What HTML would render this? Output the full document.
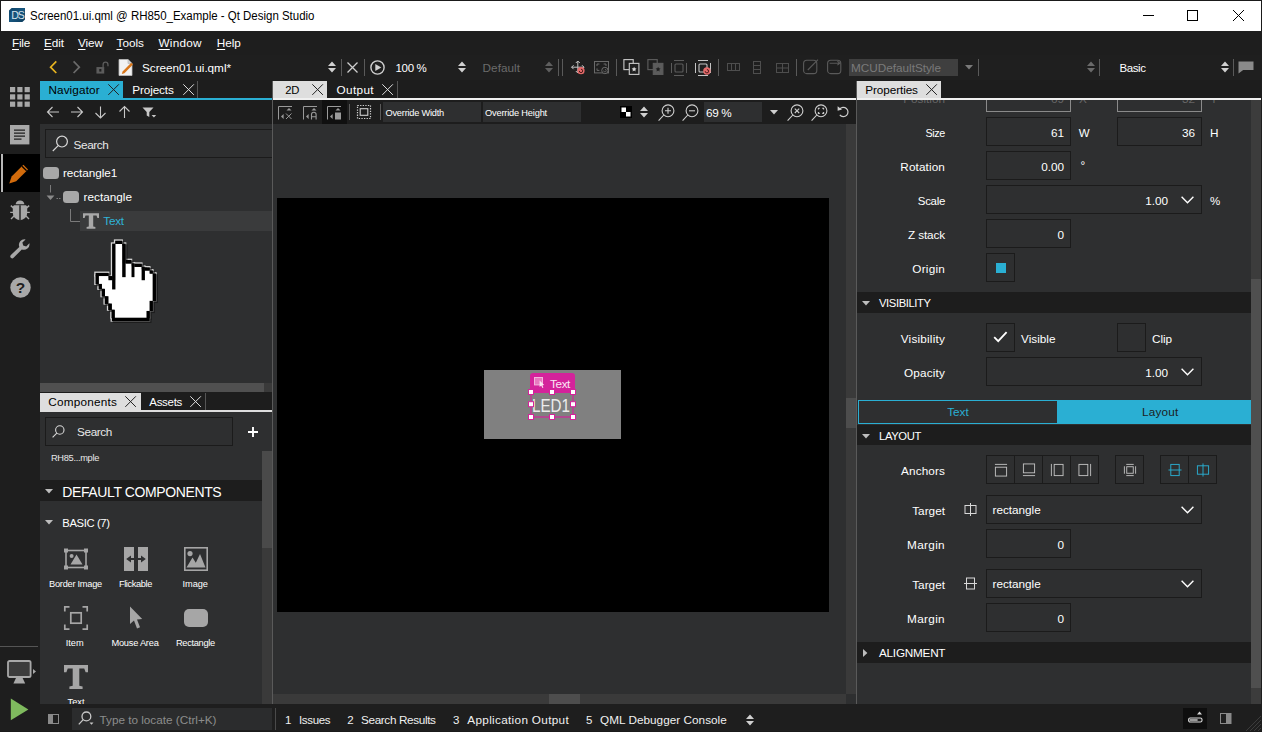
<!DOCTYPE html>
<html lang="en">
<head>
<meta charset="utf-8">
<title>Screen01.ui.qml @ RH850_Example - Qt Design Studio</title>
<style>
*{box-sizing:border-box;margin:0;padding:0}
html,body{width:1262px;height:732px;overflow:hidden;background:#2e2f30}
body{font-family:"Liberation Sans",sans-serif;font-size:12px;color:#fff;position:relative}
.a{position:absolute}
.t{position:absolute;white-space:nowrap;line-height:16px;height:16px}
svg{position:absolute;overflow:visible}
u{text-decoration:underline;text-underline-offset:2px;text-decoration-thickness:1px}
.f{position:absolute;background:#2e2f30;border:1px solid #1b1b1b}
</style>
</head>
<body>
<div class="a" style="left:0px;top:0px;width:1262px;height:31px;background:#fff;border:1px solid #1a1a1a;border-bottom:0"></div>
<div class="a" style="left:0px;top:31px;width:1262px;height:24px;background:#1e1e1e;"></div>
<div class="a" style="left:0px;top:55px;width:1262px;height:25px;background:#1f1f1f;"></div>
<div class="a" style="left:0px;top:55px;width:40px;height:677px;background:#1e1e1e;"></div>
<div class="a" style="left:40px;top:80px;width:1222px;height:20px;background:#1d1d1d;"></div>
<div class="t" id="t0" style="left:30px;top:7.5px;font-size:12.5px;color:#000;transform:scaleX(0.9175);transform-origin:0 0;">Screen01.ui.qml @ RH850_Example - Qt Design Studio</div>
<svg style="left:9px;top:8px" width="16" height="14" viewBox="0 0 16 14"><defs><linearGradient id="dsg" x1="0" y1="0" x2="1" y2="1"><stop offset="0" stop-color="#0f4468"/><stop offset="0.5" stop-color="#17567f"/><stop offset="1" stop-color="#0c3b5b"/></linearGradient></defs><path d="M2.6 0H16V11.4L13.4 14H0V2.6z" fill="url(#dsg)"/><text x="8.5" y="10.9" font-family="Liberation Sans,sans-serif" font-size="10.6" fill="#d4e2ec" text-anchor="middle" letter-spacing="-1">DS</text></svg>
<svg style="left:1130px;top:0" width="132" height="31" viewBox="0 0 132 31" fill="none" stroke="#000" stroke-width="1"><path d="M13 15.5h11"/><rect x="57.5" y="10.5" width="10" height="10"/><path d="M103 10l11 11M114 10l-11 11"/></svg>
<div class="t" id="t1" style="left:12px;top:34.5px;font-size:11.75px;color:#fff;letter-spacing:-0.238px;"><u>F</u>ile</div>
<div class="t" id="t2" style="left:44px;top:34.5px;font-size:11.75px;color:#fff;letter-spacing:-0.066px;"><u>E</u>dit</div>
<div class="t" id="t3" style="left:78px;top:34.5px;font-size:11.75px;color:#fff;letter-spacing:-0.116px;"><u>V</u>iew</div>
<div class="t" id="t4" style="left:116.5px;top:34.5px;font-size:11.75px;color:#fff;letter-spacing:0.013px;"><u>T</u>ools</div>
<div class="t" id="t5" style="left:158.4px;top:34.5px;font-size:11.75px;color:#fff;letter-spacing:0.267px;"><u>W</u>indow</div>
<div class="t" id="t6" style="left:216.8px;top:34.5px;font-size:11.75px;color:#fff;letter-spacing:-0.097px;"><u>H</u>elp</div>
<svg style="left:49px;top:60px" width="34" height="15" viewBox="0 0 34 15" fill="none" stroke-width="1.7"><path d="M7.3 1.4L1.6 7.2L7.3 13" stroke="#e6b320"/><path d="M24.6 1.4L30.3 7.2L24.6 13" stroke="#6a6a6a"/></svg>
<svg style="left:95.5px;top:60.5px" width="13" height="13" viewBox="0 0 15 15"><rect x="0.5" y="7" width="9" height="7.5" fill="#5c5c5c"/><rect x="3.8" y="9.2" width="2.4" height="3" fill="#1f1f1f"/><path d="M8.2 7V4.2a2.8 2.8 0 0 1 5.6 0V6" fill="none" stroke="#5c5c5c" stroke-width="1.5"/></svg>
<svg style="left:118px;top:59px" width="16" height="17" viewBox="0 0 16 17"><path d="M1 0.5h9l4 4V16.5H1z" fill="#f2f2f2" stroke="#bdbdbd" stroke-width="0.8"/><path d="M10 0.5v4h4" fill="#d0d0d0" stroke="#bdbdbd" stroke-width="0.8"/><path d="M3.8 15l0.8-2.6 8.6-8.6 1.8 1.8-8.6 8.6z" fill="#d8761a"/></svg>
<div class="t" id="t7" style="left:142px;top:59.6px;font-size:11.75px;color:#fff;letter-spacing:-0.030px;">Screen01.ui.qml*</div>
<svg style="left:328px;top:61px" width="8" height="12" viewBox="0 0 8 12"><path d="M0 5L4 0.5L8 5zM0 7L4 11.5L8 7z" fill="#d0d0d0"/></svg>
<div class="a" style="left:341px;top:59px;width:1px;height:17px;background:#5a5a5a;"></div>
<svg style="left:347px;top:62px" width="11" height="11" viewBox="0 0 11 11"><path d="M0.5 0.5l10 10M10.5 0.5l-10 10" stroke="#cfcfcf" stroke-width="1.3"/></svg>
<div class="a" style="left:364px;top:59px;width:1px;height:17px;background:#5a5a5a;"></div>
<svg style="left:370px;top:60px" width="15" height="15" viewBox="0 0 15 15"><circle cx="7.5" cy="7.5" r="6.6" fill="none" stroke="#cfcfcf" stroke-width="1.4"/><path d="M5.3 3.9v7.2l6-3.6z" fill="#cfcfcf"/></svg>
<div class="t" id="t8" style="left:395.5px;top:59.6px;font-size:11.5px;color:#fff;letter-spacing:-0.322px;">100 %</div>
<svg style="left:457.5px;top:61px" width="8" height="12" viewBox="0 0 8 12"><path d="M0 5L4 0.5L8 5zM0 7L4 11.5L8 7z" fill="#d0d0d0"/></svg>
<div class="t" id="t9" style="left:482.6px;top:59.6px;font-size:11.75px;color:#6b6b6b;letter-spacing:0.024px;">Default</div>
<svg style="left:545px;top:61px" width="8" height="12" viewBox="0 0 8 12"><path d="M0 5L4 0.5L8 5zM0 7L4 11.5L8 7z" fill="#5f5f5f"/></svg>
<div class="a" style="left:558px;top:59px;width:1px;height:17px;background:#5a5a5a;"></div>
<div class="a" style="left:562px;top:59px;width:1px;height:17px;background:#5a5a5a;"></div>
<svg style="left:570.5px;top:60px" width="15" height="15" viewBox="0 0 15 15"><g fill="none" stroke="#c4c4c4" stroke-width="1"><path d="M6.8 1v12M0.6 7.2h12.4"/><path d="M4.8 3L6.8 1L8.8 3M2.6 5.2L0.6 7.2L2.6 9.2M11 5.2L13 7.2L11 9.2M4.8 11L6.8 13L8.8 11"/></g><circle cx="10" cy="10.7" r="3.6" fill="#e46a6a"/><path d="M8.3 10.899999999999999a1.7 1.7 0 1 0 1.7-1.7" fill="none" stroke="#3a1212" stroke-width="0.9"/></svg>
<svg style="left:593.5px;top:61px" width="16" height="14" viewBox="0 0 16 14" fill="none" stroke="#6a6a6a" stroke-width="1"><rect x="0.5" y="0.5" width="14" height="11.4"/><path d="M3 5V3H5.4M9.6 3H12V5M3 7.4V9.4H5.4"/><circle cx="10.9" cy="9.5" r="3.2" fill="#1f1f1f"/><path d="M9.6 9.6a1.3 1.3 0 1 0 1.3-1.3" stroke-width="0.8"/></svg>
<div class="a" style="left:616px;top:59px;width:1px;height:17px;background:#5a5a5a;"></div>
<svg style="left:622.5px;top:59px" width="17" height="16" viewBox="0 0 17 16"><rect x="0.9" y="0.6" width="9.3" height="10" fill="none" stroke="#c4c4c4" stroke-width="1.15"/><rect x="6.3" y="4.4" width="9.6" height="11" fill="#1f1f1f" stroke="#c4c4c4" stroke-width="1.15"/><path d="M11.1 7.8l0.75 1.55 1.7 0.2-1.25 1.2 0.3 1.7-1.5-0.85-1.5 0.85 0.3-1.7-1.25-1.2 1.7-0.2z" fill="#d8d8d8"/></svg>
<svg style="left:646.5px;top:59px" width="17" height="16" viewBox="0 0 17 16"><rect x="0.9" y="0.6" width="9.3" height="10" fill="none" stroke="#5c5c5c" stroke-width="1.15"/><rect x="6.3" y="4.4" width="9.6" height="11" fill="#5c5c5c" stroke="#5c5c5c" stroke-width="1.15"/><path d="M11.1 7.8l0.75 1.55 1.7 0.2-1.25 1.2 0.3 1.7-1.5-0.85-1.5 0.85 0.3-1.7-1.25-1.2 1.7-0.2z" fill="#1f1f1f"/></svg>
<svg style="left:670.5px;top:59.5px" width="16" height="16" viewBox="0 0 16 16" fill="none" stroke="#5c5c5c" stroke-width="1"><path d="M3 0.5h10M3 15.5h10M0.5 3v10M15.5 3v10"/><rect x="4" y="4" width="8" height="8" rx="1" stroke-width="1.1"/></svg>
<svg style="left:694.5px;top:59.5px" width="16" height="16" viewBox="0 0 16 16" fill="none" stroke="#c4c4c4" stroke-width="1"><path d="M3 0.5h10M3 15.5h10M0.5 3v10M15.5 3v10"/><rect x="4" y="4" width="8" height="8" rx="1" stroke-width="1.1"/><circle stroke="none" cx="11.9" cy="11" r="3.7" fill="#e46a6a"/><path d="M10.200000000000001 11.2a1.7 1.7 0 1 0 1.7-1.7" fill="none" stroke="#3a1212" stroke-width="0.9"/></svg>
<div class="a" style="left:718px;top:59px;width:1px;height:17px;background:#5a5a5a;"></div>
<svg style="left:727px;top:63px" width="13" height="8" viewBox="0 0 13 8" fill="none" stroke="#4e4e4e" stroke-width="1"><rect x="0.5" y="0.5" width="12" height="7"/><path d="M4.5 0.5v7M8.5 0.5v7"/></svg>
<svg style="left:753px;top:61px" width="8" height="13" viewBox="0 0 8 13" fill="none" stroke="#4e4e4e" stroke-width="1"><rect x="0.5" y="0.5" width="7" height="12"/><path d="M0.5 4.5h7M0.5 8.5h7"/></svg>
<svg style="left:775.5px;top:62.5px" width="13" height="10" viewBox="0 0 13 10" fill="none" stroke="#4e4e4e" stroke-width="1"><rect x="0.5" y="0.5" width="12" height="9"/><path d="M6.5 0.5v9M0.5 5h12"/></svg>
<div class="a" style="left:796px;top:59px;width:1px;height:17px;background:#5a5a5a;"></div>
<svg style="left:803px;top:59px" width="16" height="16" viewBox="0 0 16 16" fill="none" stroke="#5a5a5a" stroke-width="1.1"><rect x="0.6" y="1.2" width="13.2" height="13.4" rx="3.2"/><path d="M4.8 11L15 0.6"/></svg>
<svg style="left:827px;top:59px" width="15" height="16" viewBox="0 0 15 16" fill="none" stroke="#5a5a5a" stroke-width="1.1"><rect x="0.6" y="1.2" width="13.2" height="13.4" rx="3.2"/><path d="M2.6 4.2h10M10.4 2.2l2.4 2-2.4 2"/></svg>
<div class="a" style="left:849px;top:59px;width:109px;height:17px;background:#3f3f3f;"></div>
<div class="t" id="t10" style="left:851px;top:59.6px;font-size:11.75px;color:#7a7a7a;letter-spacing:-0.008px;">MCUDefaultStyle</div>
<svg style="left:965px;top:65px" width="8" height="5" viewBox="0 0 8 5"><path d="M0 0h8L4 4.6z" fill="#7a7a7a"/></svg>
<div class="a" style="left:978px;top:59px;width:1px;height:17px;background:#5a5a5a;"></div>
<svg style="left:1086.5px;top:61px" width="8" height="12" viewBox="0 0 8 12"><path d="M0 5L4 0.5L8 5zM0 7L4 11.5L8 7z" fill="#6a6a6a"/></svg>
<div class="a" style="left:1099px;top:59px;width:1px;height:17px;background:#5a5a5a;"></div>
<div class="t" id="t11" style="left:1119.4px;top:59.6px;font-size:11.5px;color:#fff;letter-spacing:-0.385px;">Basic</div>
<svg style="left:1220.5px;top:61px" width="8" height="12" viewBox="0 0 8 12"><path d="M0 5L4 0.5L8 5zM0 7L4 11.5L8 7z" fill="#d0d0d0"/></svg>
<div class="a" style="left:1233px;top:59px;width:1px;height:17px;background:#5a5a5a;"></div>
<svg style="left:1237px;top:61px" width="17" height="13" viewBox="0 0 17 13"><path d="M1.5 0.5h15v8.6H6.2L1.5 12.6z" fill="#8a8a8a"/></svg>
<div class="a" style="left:40px;top:98px;width:232px;height:2px;background:#2aafd3;"></div>
<div class="a" style="left:40px;top:81px;width:83px;height:17px;background:#2aafd3;"></div>
<div class="t" id="t12" style="left:48.4px;top:81.75px;font-size:11.75px;color:#000;letter-spacing:0.111px;">Navigator</div>
<svg style="left:108.2px;top:83.9px" width="11.2" height="11.2" viewBox="0 0 11.2 11.2"><path d="M0.3 0.3L10.899999999999999 10.899999999999999M10.899999999999999 0.3L0.3 10.899999999999999" stroke="#222" stroke-width="1"/></svg>
<div class="t" id="t13" style="left:132.3px;top:81.75px;font-size:11.75px;color:#fff;letter-spacing:-0.132px;">Projects</div>
<svg style="left:182.5px;top:83.9px" width="11.2" height="11.2" viewBox="0 0 11.2 11.2"><path d="M0.3 0.3L10.899999999999999 10.899999999999999M10.899999999999999 0.3L0.3 10.899999999999999" stroke="#ddd" stroke-width="1"/></svg>
<div class="a" style="left:197px;top:81px;width:1px;height:17px;background:#555;"></div>
<div class="a" style="left:273px;top:98px;width:988px;height:2px;background:#f0f0f0;"></div>
<div class="a" style="left:273px;top:81px;width:54px;height:17px;background:#dedede;"></div>
<div class="t" id="t14" style="left:285.3px;top:81.75px;font-size:11.25px;color:#000;letter-spacing:-0.345px;">2D</div>
<svg style="left:312.4px;top:83.9px" width="11.2" height="11.2" viewBox="0 0 11.2 11.2"><path d="M0.3 0.3L10.899999999999999 10.899999999999999M10.899999999999999 0.3L0.3 10.899999999999999" stroke="#222" stroke-width="1"/></svg>
<div class="t" id="t15" style="left:336.5px;top:81.75px;font-size:11.75px;color:#fff;letter-spacing:0.353px;">Output</div>
<svg style="left:382.3px;top:83.9px" width="11.2" height="11.2" viewBox="0 0 11.2 11.2"><path d="M0.3 0.3L10.899999999999999 10.899999999999999M10.899999999999999 0.3L0.3 10.899999999999999" stroke="#ddd" stroke-width="1"/></svg>
<div class="a" style="left:397px;top:81px;width:1px;height:17px;background:#555;"></div>
<div class="a" style="left:857px;top:81px;width:84px;height:17px;background:#dedede;"></div>
<div class="t" id="t16" style="left:865.3px;top:81.75px;font-size:11.75px;color:#000;letter-spacing:-0.096px;">Properties</div>
<svg style="left:926.2px;top:83.9px" width="11.2" height="11.2" viewBox="0 0 11.2 11.2"><path d="M0.3 0.3L10.899999999999999 10.899999999999999M10.899999999999999 0.3L0.3 10.899999999999999" stroke="#222" stroke-width="1"/></svg>
<div class="a" style="left:40px;top:392px;width:232px;height:20px;background:#1d1d1d;"></div>
<div class="a" style="left:40px;top:410px;width:232px;height:2px;background:#dedede;"></div>
<div class="a" style="left:40px;top:393px;width:100.5px;height:17px;background:#dedede;"></div>
<div class="t" id="t17" style="left:48.3px;top:393.75px;font-size:11.75px;color:#000;letter-spacing:0.208px;">Components</div>
<svg style="left:125.4px;top:395.9px" width="11.2" height="11.2" viewBox="0 0 11.2 11.2"><path d="M0.3 0.3L10.899999999999999 10.899999999999999M10.899999999999999 0.3L0.3 10.899999999999999" stroke="#222" stroke-width="1"/></svg>
<div class="t" id="t18" style="left:149.3px;top:393.75px;font-size:11.5px;color:#fff;letter-spacing:-0.303px;">Assets</div>
<svg style="left:190px;top:395.9px" width="11.2" height="11.2" viewBox="0 0 11.2 11.2"><path d="M0.3 0.3L10.899999999999999 10.899999999999999M10.899999999999999 0.3L0.3 10.899999999999999" stroke="#ddd" stroke-width="1"/></svg>
<div class="a" style="left:205px;top:393px;width:1px;height:17px;background:#555;"></div>
<div class="a" style="left:272px;top:81px;width:1px;height:623px;background:#5a5a5a;"></div>
<div class="a" style="left:856px;top:81px;width:1px;height:623px;background:#5a5a5a;"></div>
<div class="a" style="left:40px;top:100px;width:232px;height:24px;background:#1d1d1d;"></div>
<svg style="left:46px;top:105px" width="116" height="14" viewBox="0 0 116 14" fill="none" stroke="#c8c8c8" stroke-width="1.1"><path d="M1.5 7H13M6.5 2L1.5 7L6.5 12"/><path d="M25 7H36.5M31.5 2L36.5 7L31.5 12"/><path d="M54.5 1.5V13M49.5 8L54.5 13L59.5 8"/><path d="M78.5 13V1.5M73.5 6.5L78.5 1.5L83.5 6.5"/><path d="M96.5 2.5h11l-4.2 4.6v5l-2.6-1.6v-3.4z" fill="#c8c8c8" stroke="none"/><path d="M105.6 10h4.6l-2.3 2.5z" fill="#c8c8c8" stroke="none"/></svg>
<div class="f" style="left:45px;top:129px;width:227px;height:29px;border-right:0"></div>
<svg style="left:52px;top:135px" width="17" height="17" viewBox="0 0 17 17" fill="none" stroke="#d8d8d8" stroke-width="1.2"><circle cx="10" cy="6.6" r="5.4"/><path d="M6.2 10.6L0.8 16"/></svg>
<div class="t" id="t19" style="left:73.5px;top:136.5px;font-size:11.75px;color:#e8e8e8;letter-spacing:-0.372px;">Search</div>
<div class="a" style="left:43px;top:167px;width:16px;height:12px;background:#a8a8a8;border-radius:3.5px"></div>
<div class="t" id="t20" style="left:63px;top:165px;font-size:11.75px;color:#fff;letter-spacing:-0.067px;">rectangle1</div>
<div class="a" style="left:63px;top:191px;width:16px;height:12px;background:#a8a8a8;border-radius:3.5px"></div>
<div class="t" id="t21" style="left:83.6px;top:189px;font-size:11.75px;color:#fff;letter-spacing:0.006px;">rectangle</div>
<svg style="left:44px;top:184px" width="18" height="18" viewBox="0 0 18 18"><path d="M6.5 1V8.5" stroke="#7a7a7a" stroke-width="1"/><path d="M12.5 14.5h4" stroke="#7a7a7a" stroke-width="1" stroke-dasharray="1.5 1"/><path d="M2.6 11.5h7.8L6.5 16z" fill="#8a8a8a"/></svg>
<div class="a" style="left:80px;top:211px;width:192px;height:20px;background:#3a3b3c;"></div>
<svg style="left:70px;top:209px" width="11" height="13" viewBox="0 0 11 13" fill="none" stroke="#7a7a7a" stroke-width="1"><path d="M0.5 0V12.5H10"/></svg>
<svg style="left:83px;top:213px" width="16" height="16" viewBox="0 0 16 15.4"><path d="M0 0h16v4.6h-1.6l-0.9-2.3h-3.3v11l2.2 0.5v1.6H3.6v-1.6l2.2-0.5v-11H2.5l-0.9 2.3H0z" fill="#a8a8a8"/></svg>
<div class="t" id="t22" style="left:103.3px;top:213px;font-size:11.75px;color:#2fb4d8;letter-spacing:-0.266px;">Text</div>
<div class="a" style="left:40px;top:383px;width:232px;height:9px;background:#3a3a3a;"></div>
<div class="a" style="left:40px;top:383px;width:224px;height:9px;background:#505050;"></div>
<div class="f" style="left:45px;top:417px;width:188px;height:29px"></div>
<svg style="left:52px;top:425px" width="13" height="13" viewBox="0 0 13 13" fill="none" stroke="#d8d8d8" stroke-width="1.1"><circle cx="7.8" cy="5" r="4.2"/><path d="M4.8 8.2L0.6 12.4"/></svg>
<div class="t" id="t23" style="left:77px;top:424px;font-size:11.75px;color:#e8e8e8;letter-spacing:-0.372px;">Search</div>
<svg style="left:247.5px;top:427px" width="10" height="10" viewBox="0 0 10 10"><path d="M5 0v10M0 5h10" stroke="#fff" stroke-width="1.9"/></svg>
<div class="t" id="t24" style="left:51px;top:450px;font-size:9.25px;color:#e8e8e8;letter-spacing:-0.311px;">RH85...mple</div>
<div class="a" style="left:40px;top:480px;width:222px;height:21px;background:#1d1d1d;"></div>
<svg style="left:44.5px;top:489px" width="8" height="5" viewBox="0 0 8 5"><path d="M0 0h8L4 4.4z" fill="#bdbdbd"/></svg>
<div class="t" id="t25" style="left:62.3px;top:484px;font-size:14.0px;color:#fff;letter-spacing:-0.386px;">DEFAULT COMPONENTS</div>
<svg style="left:44.5px;top:520px" width="8" height="5" viewBox="0 0 8 5"><path d="M0 0h8L4 4.4z" fill="#bdbdbd"/></svg>
<div class="t" id="t26" style="left:62.3px;top:515px;font-size:11.25px;color:#fff;letter-spacing:-0.382px;">BASIC (7)</div>
<div class="a" style="left:262px;top:451px;width:10px;height:253px;background:#3a3a3a;"></div>
<div class="a" style="left:262px;top:451px;width:10px;height:97px;background:#4a4a4a;"></div>
<svg style="left:64px;top:547px" width="24" height="24" viewBox="0 0 24 24"><rect x="2" y="3.5" width="20" height="17" fill="none" stroke="#a6a6a6" stroke-width="1.6"/><g fill="#a6a6a6"><rect x="0" y="1.5" width="4" height="4"/><rect x="20" y="1.5" width="4" height="4"/><rect x="0" y="18.5" width="4" height="4"/><rect x="20" y="18.5" width="4" height="4"/><circle cx="7.6" cy="9" r="2"/><path d="M6.5 17.5L12.5 7.5L18.5 17.5z"/></g></svg>
<svg style="left:124px;top:547px" width="24" height="24" viewBox="0 0 24 24"><rect x="0" y="0" width="10" height="24" fill="#a6a6a6"/><rect x="14" y="0" width="10" height="24" fill="#a6a6a6"/><path d="M2.2 12L7 8.4V11h3v2H7v2.6zM21.8 12L17 8.4V11h-3v2h3v2.6z" fill="#2e2f30"/></svg>
<svg style="left:184px;top:547px" width="24" height="24" viewBox="0 0 24 24"><rect x="0.8" y="0.8" width="22.4" height="22.4" fill="none" stroke="#a6a6a6" stroke-width="1.6"/><g fill="#a6a6a6"><circle cx="6" cy="6.6" r="2.6"/><path d="M2.5 20.5L8.5 10.5L11.8 15.8L16 7L21.5 20.5z"/></g></svg>
<svg style="left:64px;top:606px" width="24" height="24" viewBox="0 0 24 24" fill="none" stroke="#a6a6a6" stroke-width="1.7"><path d="M0.8 5.5V0.8H5.5M18.5 0.8H23.2V5.5M23.2 18.5V23.2H18.5M5.5 23.2H0.8V18.5"/><rect x="6.8" y="6.8" width="10.4" height="10.4"/></svg>
<svg style="left:129px;top:606px" width="14" height="24" viewBox="0 0 14 24"><path d="M1 0.5V18L5 14.6L8 22.5L11 21.3L8 13.6L13.2 13z" fill="#a6a6a6"/></svg>
<div class="a" style="left:184px;top:609px;width:24px;height:18px;background:#a6a6a6;border-radius:5px"></div>
<svg style="left:64px;top:665px" width="24" height="24" viewBox="0 0 16 16"><path d="M0 0h16v4.6h-1.6l-0.9-2.3h-3.3v11l2.2 0.5v1.6H3.6v-1.6l2.2-0.5v-11H2.5l-0.9 2.3H0z" transform="scale(1 1.04)" fill="#a6a6a6"/></svg>
<div class="t" id="t27" style="left:49px;top:576px;font-size:9.25px;color:#fff;letter-spacing:-0.254px;">Border Image</div>
<div class="t" id="t28" style="left:118.9px;top:576px;font-size:9.25px;color:#fff;letter-spacing:-0.389px;">Flickable</div>
<div class="t" id="t29" style="left:182.6px;top:576px;font-size:9.25px;color:#fff;letter-spacing:-0.084px;">Image</div>
<div class="t" id="t30" style="left:65.7px;top:635px;font-size:9.25px;color:#fff;letter-spacing:0.000px;">Item</div>
<div class="t" id="t31" style="left:111.4px;top:635px;font-size:9.25px;color:#fff;letter-spacing:-0.217px;">Mouse Area</div>
<div class="t" id="t32" style="left:176px;top:635px;font-size:9.25px;color:#fff;letter-spacing:-0.317px;">Rectangle</div>
<div class="t" id="t33" style="left:67.5px;top:694px;font-size:9.25px;color:#fff;letter-spacing:0.008px;">Text</div>
<div class="a" style="left:273px;top:100px;width:583px;height:24px;background:#1d1d1d;"></div>
<svg style="left:278px;top:105.5px" width="15" height="14" viewBox="0 0 15 14"><path d="M0.5 13.5V0.5H14" fill="none" stroke="#9a9a9a" stroke-width="1"/><path d="M3 10.5L5.6 8V13z" fill="#9a9a9a"/><path d="M8.5 4.5h5L11 2z" fill="#9a9a9a"/><path d="M8 7.5l5.5 5.5M13.5 7.5L8 13" stroke="#9a9a9a" stroke-width="1" fill="none"/></svg>
<svg style="left:303px;top:105.5px" width="15" height="14" viewBox="0 0 15 14"><path d="M0.5 13.5V0.5H14" fill="none" stroke="#9a9a9a" stroke-width="1"/><path d="M3 10.5L5.6 8V13z" fill="#9a9a9a"/><path d="M8.5 4.5h5L11 2z" fill="#9a9a9a"/><path d="M8.5 13.5V8.6a2.3 2.3 0 0 1 4.6 0V13.5M8.5 10.8h4.6" stroke="#9a9a9a" stroke-width="1.1" fill="none"/></svg>
<div class="a" style="left:322px;top:100px;width:25px;height:24px;background:#101010;"></div>
<svg style="left:327px;top:105.5px" width="15" height="14" viewBox="0 0 15 14"><path d="M0.5 13.5V0.5H14" fill="none" stroke="#9a9a9a" stroke-width="1"/><path d="M3 10.5L5.6 8V13z" fill="#9a9a9a"/><path d="M8.5 4.5h5L11 2z" fill="#9a9a9a"/><rect x="8" y="6.5" width="6" height="7" fill="#9a9a9a"/></svg>
<div class="a" style="left:349px;top:104px;width:1px;height:16px;background:#5a5a5a;"></div>
<svg style="left:357px;top:105px" width="14" height="14" viewBox="0 0 14 14" fill="none" stroke="#d0d0d0"><rect x="0.5" y="0.5" width="13" height="13" stroke-width="1.2" stroke-dasharray="1.3 1.3"/><rect x="3.2" y="3.7" width="7.6" height="6.6" stroke-width="1.1"/></svg>
<div class="a" style="left:380px;top:104px;width:1px;height:16px;background:#5a5a5a;"></div>
<div class="a" style="left:383px;top:102px;width:98px;height:20px;background:#2e2f30;"></div>
<div class="a" style="left:483px;top:102px;width:98px;height:20px;background:#2e2f30;"></div>
<div class="t" id="t34" style="left:385.5px;top:105px;font-size:9.25px;color:#fff;letter-spacing:-0.228px;">Override Width</div>
<div class="t" id="t35" style="left:485px;top:105px;font-size:9.25px;color:#fff;letter-spacing:-0.185px;">Override Height</div>
<svg style="left:620px;top:106px" width="12" height="12" viewBox="0 0 12 12"><rect width="12" height="12" fill="#000"/><rect x="1.5" y="1.5" width="4.5" height="4.5" fill="#fff"/><rect x="6" y="6" width="4.5" height="4.5" fill="#fff"/></svg>
<svg style="left:640px;top:106px" width="8" height="12" viewBox="0 0 8 12"><path d="M0 5L4 0.5L8 5zM0 7L4 11.5L8 7z" fill="#d0d0d0"/></svg>
<svg style="left:658px;top:104px" width="17" height="18" viewBox="0 0 17 18" fill="none" stroke="#cfcfcf" stroke-width="1.1"><circle cx="10" cy="6.8" r="5.9"/><path d="M5.8 11L0.6 16.6"/><path d="M10 3.8v6M7 6.8h6"/></svg>
<svg style="left:682px;top:104px" width="17" height="18" viewBox="0 0 17 18" fill="none" stroke="#cfcfcf" stroke-width="1.1"><circle cx="10" cy="6.8" r="5.9"/><path d="M5.8 11L0.6 16.6"/><path d="M7 6.8h6"/></svg>
<div class="a" style="left:704px;top:102px;width:58px;height:20px;background:#2e2f30;"></div>
<div class="t" id="t36" style="left:706px;top:104.8px;font-size:11.75px;color:#fff;letter-spacing:-0.324px;">69 %</div>
<svg style="left:769.5px;top:110px" width="8" height="5" viewBox="0 0 8 5"><path d="M0 0h8L4 4.6z" fill="#cfcfcf"/></svg>
<svg style="left:787px;top:104px" width="17" height="18" viewBox="0 0 17 18" fill="none" stroke="#cfcfcf" stroke-width="1.1"><circle cx="10" cy="6.8" r="5.9"/><path d="M5.8 11L0.6 16.6"/><path d="M7.8 4.6l4.4 4.4M12.2 4.6L7.8 9"/></svg>
<svg style="left:811px;top:104px" width="17" height="18" viewBox="0 0 17 18" fill="none" stroke="#cfcfcf" stroke-width="1.1"><circle cx="10" cy="6.8" r="5.9"/><path d="M5.8 11L0.6 16.6"/><path d="M7.4 5.6V4.2h1.4M11.2 4.2h1.4v1.4M12.6 8v1.4h-1.4M8.8 9.4H7.4V8"/></svg>
<svg style="left:837px;top:105px" width="12" height="13" viewBox="0 0 12 13"><path d="M2.6 4.4A4.6 4.6 0 1 1 2.8 9.9" fill="none" stroke="#cfcfcf" stroke-width="1.2"/><path d="M0.6 1.2V5.8L5 4.6z" fill="#cfcfcf"/></svg>
<div class="a" style="left:277px;top:198px;width:552px;height:414px;background:#000;"></div>
<div class="a" style="left:484px;top:370px;width:137px;height:69px;background:#808080;"></div>
<div class="a" style="left:530px;top:373px;width:45px;height:20px;background:#d4239b;border-radius:3px 3px 0 0"></div>
<svg style="left:534px;top:377px" width="11" height="11" viewBox="0 0 11 11"><rect x="0.5" y="0.5" width="8" height="7.4" fill="#e878c0" stroke="#f4b4dc" stroke-width="1"/><path d="M5.6 3.6V10L7.2 8.6L8.4 11L9.4 10.5L8.3 8.2L10.2 8z" fill="#fbe3f2"/></svg>
<div class="t" id="t37" style="left:550px;top:375.6px;font-size:11.75px;color:#fbe6f4;letter-spacing:-0.391px;">Text</div>
<div class="t" id="t38" style="left:532px;top:396px;font-size:17.5px;color:#ececec;line-height:20px;height:20px;transform:scaleX(0.868);transform-origin:0 0;">LED1</div>
<svg style="left:520px;top:380px" width="70" height="50" viewBox="0 0 70 50"><rect x="11" y="12" width="42" height="25" fill="none" stroke="#d4239b" stroke-width="1.2"/><rect x="8.5" y="9.5" width="5" height="5" fill="#fff" stroke="#d4239b" stroke-width="1"/><rect x="8.5" y="21.69999999999999" width="5" height="5" fill="#fff" stroke="#d4239b" stroke-width="1"/><rect x="8.5" y="34.5" width="5" height="5" fill="#fff" stroke="#d4239b" stroke-width="1"/><rect x="29.5" y="9.5" width="5" height="5" fill="#fff" stroke="#d4239b" stroke-width="1"/><rect x="29.5" y="34.5" width="5" height="5" fill="#fff" stroke="#d4239b" stroke-width="1"/><rect x="50.5" y="9.5" width="5" height="5" fill="#fff" stroke="#d4239b" stroke-width="1"/><rect x="50.5" y="21.69999999999999" width="5" height="5" fill="#fff" stroke="#d4239b" stroke-width="1"/><rect x="50.5" y="34.5" width="5" height="5" fill="#fff" stroke="#d4239b" stroke-width="1"/></svg>
<div class="a" style="left:273px;top:694px;width:573px;height:10px;background:#3a3a3a;"></div>
<div class="a" style="left:549px;top:694px;width:31px;height:10px;background:#4d4d4d;"></div>
<div class="a" style="left:846px;top:124px;width:10px;height:570px;background:#3a3a3a;"></div>
<div class="a" style="left:846px;top:398px;width:10px;height:30px;background:#4d4d4d;"></div>
<div class="f" style="left:986px;top:83px;width:85px;height:29px;border-color:#8a8a8a"></div>
<div class="f" style="left:1117px;top:83px;width:85px;height:29px;border-color:#8a8a8a"></div>
<div class="t" id="t39" style="right:317px;top:91px;font-size:11.75px;color:#666;">Position</div>
<div class="t" id="t40" style="right:198px;top:91px;font-size:11.75px;color:#666;">69</div>
<div class="t" id="t41" style="right:67px;top:91px;font-size:11.75px;color:#666;">32</div>
<div class="t" id="t42" style="left:1079px;top:91px;font-size:11.75px;color:#666;">X</div>
<div class="t" id="t43" style="left:1210px;top:91px;font-size:11.75px;color:#666;">Y</div>
<div class="a" style="left:857px;top:81px;width:405px;height:17px;background:#1d1d1d;"></div>
<div class="a" style="left:857px;top:98px;width:404px;height:2px;background:#f0f0f0;"></div>
<div class="a" style="left:857px;top:81px;width:84px;height:17px;background:#dedede;"></div>
<div class="t" id="t44" style="left:865.3px;top:81.75px;font-size:11.75px;color:#000;letter-spacing:-0.096px;">Properties</div>
<svg style="left:926.2px;top:83.9px" width="11.2" height="11.2" viewBox="0 0 11.2 11.2"><path d="M0.3 0.3L10.899999999999999 10.899999999999999M10.899999999999999 0.3L0.3 10.899999999999999" stroke="#222" stroke-width="1"/></svg>
<div class="f" style="left:986px;top:117px;width:85px;height:29px;"></div>
<div class="f" style="left:1117px;top:117px;width:85px;height:29px;"></div>
<div class="t" id="t45" style="right:317px;top:124.5px;font-size:10.75px;color:#fff;letter-spacing:-0.330px;">Size</div>
<div class="t" id="t46" style="right:198px;top:124.5px;font-size:11.75px;color:#fff;">61</div>
<div class="t" id="t47" style="right:67px;top:124.5px;font-size:11.75px;color:#fff;">36</div>
<div class="t" id="t48" style="left:1078.8px;top:124.5px;font-size:11.5px;color:#fff;letter-spacing:-0.359px;">W</div>
<div class="t" id="t49" style="left:1210px;top:124.5px;font-size:11.75px;color:#fff;letter-spacing:0.000px;">H</div>
<div class="f" style="left:986px;top:151px;width:85px;height:29px;"></div>
<div class="t" id="t50" style="right:317px;top:158.5px;font-size:11.75px;color:#fff;letter-spacing:0.117px;">Rotation</div>
<div class="t" id="t51" style="right:198px;top:158.5px;font-size:11.75px;color:#fff;">0.00</div>
<div class="t" id="t52" style="left:1080.5px;top:157px;font-size:11.75px;color:#fff;">°</div>
<div class="f" style="left:986px;top:185px;width:216px;height:29px;"></div>
<div class="t" id="t53" style="right:317px;top:192.5px;font-size:11.5px;color:#fff;letter-spacing:-0.316px;">Scale</div>
<div class="t" id="t54" style="right:94px;top:192.5px;font-size:11.75px;color:#fff;">1.00</div>
<svg style="left:1180.5px;top:196.0px" width="13" height="8" viewBox="0 0 13 8"><path d="M0.6 0.8L6.5 6.8L12.4 0.8" fill="none" stroke="#fff" stroke-width="1.4"/></svg>
<div class="t" id="t55" style="left:1210px;top:192.5px;font-size:11.5px;color:#fff;letter-spacing:-0.234px;">%</div>
<div class="f" style="left:986px;top:219px;width:85px;height:29px;"></div>
<div class="t" id="t56" style="right:317px;top:226.5px;font-size:11.75px;color:#fff;letter-spacing:-0.125px;">Z stack</div>
<div class="t" id="t57" style="right:198px;top:226.5px;font-size:11.75px;color:#fff;">0</div>
<div class="f" style="left:986px;top:253px;width:29px;height:29px;"></div>
<div class="t" id="t58" style="right:317px;top:260.5px;font-size:11.75px;color:#fff;letter-spacing:0.226px;">Origin</div>
<div class="a" style="left:996px;top:263px;width:10px;height:10px;background:#2aafd3;"></div>
<div class="a" style="left:857px;top:292px;width:394px;height:20.6px;background:#1d1d1d;"></div>
<svg style="left:861.5px;top:300.5px" width="8" height="5" viewBox="0 0 8 5"><path d="M0 0h8L4 4.4z" fill="#bdbdbd"/></svg>
<div class="t" id="t59" style="left:879px;top:295.4px;font-size:11.25px;color:#fff;letter-spacing:-0.396px;">VISIBILITY</div>
<div class="f" style="left:986px;top:323px;width:29px;height:29px;"></div>
<div class="t" id="t60" style="right:317px;top:330.5px;font-size:11.75px;color:#fff;letter-spacing:0.197px;">Visibility</div>
<svg style="left:993px;top:331px" width="15" height="12" viewBox="0 0 15 12"><path d="M1.2 6.2L5.2 10.2L13.6 1.2" fill="none" stroke="#fff" stroke-width="1.8"/></svg>
<div class="t" id="t61" style="left:1021px;top:330.5px;font-size:11.75px;color:#fff;letter-spacing:0.013px;">Visible</div>
<div class="f" style="left:1117px;top:323px;width:29px;height:29px;"></div>
<div class="t" id="t62" style="left:1152px;top:330.5px;font-size:11.75px;color:#fff;letter-spacing:-0.062px;">Clip</div>
<div class="f" style="left:986px;top:357px;width:216px;height:29px;"></div>
<div class="t" id="t63" style="right:317px;top:364.5px;font-size:11.75px;color:#fff;letter-spacing:0.165px;">Opacity</div>
<div class="t" id="t64" style="right:94px;top:364.5px;font-size:11.75px;color:#fff;">1.00</div>
<svg style="left:1180.5px;top:368.0px" width="13" height="8" viewBox="0 0 13 8"><path d="M0.6 0.8L6.5 6.8L12.4 0.8" fill="none" stroke="#fff" stroke-width="1.4"/></svg>
<div class="a" style="left:857.5px;top:400px;width:200.5px;height:24px;border:1px solid #2aafd3;background:#2e2f30"></div>
<div class="a" style="left:1058px;top:400px;width:193px;height:24px;background:#2aafd3;"></div>
<div class="t" id="t65" style="left:947.2px;top:404px;font-size:11.75px;color:#2aafd3;letter-spacing:-0.016px;">Text</div>
<div class="t" id="t66" style="left:1142px;top:404px;font-size:11.75px;color:#1d1d1d;letter-spacing:0.203px;">Layout</div>
<div class="a" style="left:857px;top:425px;width:394px;height:20px;background:#1d1d1d;"></div>
<svg style="left:861.5px;top:433.5px" width="8" height="5" viewBox="0 0 8 5"><path d="M0 0h8L4 4.4z" fill="#bdbdbd"/></svg>
<div class="t" id="t67" style="left:879px;top:427.6px;font-size:11.25px;color:#fff;letter-spacing:-0.365px;">LAYOUT</div>
<div class="t" id="t68" style="right:317px;top:462.5px;font-size:11.75px;color:#fff;letter-spacing:0.113px;">Anchors</div>
<div class="f" style="left:986px;top:455px;width:29px;height:29px;"></div>
<svg style="left:993.5px;top:462.5px" width="14" height="14" viewBox="0 0 15 15" fill="none" stroke="#c0c0c0" stroke-width="1"><path d="M1 1.5h13"/><rect x="1.5" y="4.5" width="12" height="9.5"/></svg>
<div class="f" style="left:1014px;top:455px;width:29px;height:29px;"></div>
<svg style="left:1021.5px;top:462.5px" width="14" height="14" viewBox="0 0 15 15" fill="none" stroke="#c0c0c0" stroke-width="1"><path d="M1 13.5h13"/><rect x="1.5" y="1" width="12" height="9.5"/></svg>
<div class="f" style="left:1042px;top:455px;width:29px;height:29px;"></div>
<svg style="left:1049.5px;top:462.5px" width="14" height="14" viewBox="0 0 15 15" fill="none" stroke="#c0c0c0" stroke-width="1"><path d="M1.5 1v13"/><rect x="4.5" y="1.5" width="9.5" height="12"/></svg>
<div class="f" style="left:1070px;top:455px;width:29px;height:29px;"></div>
<svg style="left:1077.5px;top:462.5px" width="14" height="14" viewBox="0 0 15 15" fill="none" stroke="#c0c0c0" stroke-width="1"><path d="M13.5 1v13"/><rect x="1" y="1.5" width="9.5" height="12"/></svg>
<div class="f" style="left:1115px;top:455px;width:29px;height:29px;"></div>
<svg style="left:1122.5px;top:462.5px" width="14" height="14" viewBox="0 0 15 15" fill="none" stroke="#c0c0c0" stroke-width="1"><path d="M1.5 3.5v8M13.5 3.5v8M3.5 1.5h8M3.5 13.5h8"/><rect x="4" y="4" width="7" height="7"/></svg>
<div class="f" style="left:1160px;top:455px;width:29px;height:29px;"></div>
<svg style="left:1167.5px;top:462.5px" width="14" height="14" viewBox="0 0 15 15" fill="none" stroke="#2aafd3" stroke-width="1"><path d="M0.5 7.5h14"/><rect x="3" y="1.5" width="9" height="12"/></svg>
<div class="f" style="left:1188px;top:455px;width:29px;height:29px;"></div>
<svg style="left:1195.5px;top:462.5px" width="14" height="14" viewBox="0 0 15 15" fill="none" stroke="#2aafd3" stroke-width="1"><path d="M7.5 0.5v14"/><rect x="1.5" y="3" width="12" height="9"/></svg>
<div class="f" style="left:986px;top:495px;width:216px;height:29px;"></div>
<div class="t" id="t69" style="right:317px;top:502.5px;font-size:11.75px;color:#fff;letter-spacing:0.021px;">Target</div>
<svg style="left:964px;top:503px" width="13" height="13" viewBox="0 0 13 13" fill="none" stroke="#d8d8d8" stroke-width="1"><path d="M6.5 0v13"/><rect x="1" y="2.5" width="11" height="8"/></svg>
<div class="t" id="t70" style="left:992.5px;top:501.6px;font-size:11.75px;color:#fff;letter-spacing:-0.016px;">rectangle</div>
<svg style="left:1180.5px;top:506.0px" width="13" height="8" viewBox="0 0 13 8"><path d="M0.6 0.8L6.5 6.8L12.4 0.8" fill="none" stroke="#fff" stroke-width="1.4"/></svg>
<div class="f" style="left:986px;top:529px;width:85px;height:29px;"></div>
<div class="t" id="t71" style="right:317px;top:536.5px;font-size:11.75px;color:#fff;letter-spacing:0.346px;">Margin</div>
<div class="t" id="t72" style="right:198px;top:536.5px;font-size:11.75px;color:#fff;">0</div>
<div class="f" style="left:986px;top:569px;width:216px;height:29px;"></div>
<div class="t" id="t73" style="right:317px;top:576.5px;font-size:11.75px;color:#fff;letter-spacing:0.021px;">Target</div>
<svg style="left:964px;top:577px" width="13" height="13" viewBox="0 0 13 13" fill="none" stroke="#d8d8d8" stroke-width="1"><path d="M0 6.5h13"/><rect x="2.5" y="1" width="8" height="11"/></svg>
<div class="t" id="t74" style="left:992.5px;top:575.6px;font-size:11.75px;color:#fff;letter-spacing:-0.016px;">rectangle</div>
<svg style="left:1180.5px;top:580.0px" width="13" height="8" viewBox="0 0 13 8"><path d="M0.6 0.8L6.5 6.8L12.4 0.8" fill="none" stroke="#fff" stroke-width="1.4"/></svg>
<div class="f" style="left:986px;top:603px;width:85px;height:29px;"></div>
<div class="t" id="t75" style="right:317px;top:610.5px;font-size:11.75px;color:#fff;letter-spacing:0.346px;">Margin</div>
<div class="t" id="t76" style="right:198px;top:610.5px;font-size:11.75px;color:#fff;">0</div>
<div class="a" style="left:857px;top:642px;width:394px;height:20.6px;background:#1d1d1d;"></div>
<svg style="left:863px;top:649px" width="5" height="8" viewBox="0 0 5 8"><path d="M0 0v8L4.4 4z" fill="#bdbdbd"/></svg>
<div class="t" id="t77" style="left:879px;top:645.4px;font-size:11.75px;color:#fff;letter-spacing:-0.251px;">ALIGNMENT</div>
<div class="a" style="left:1251px;top:100px;width:10px;height:604px;background:#3c3c3c;"></div>
<div class="a" style="left:1251px;top:279px;width:10px;height:409px;background:#4f4f4f;"></div>
<div class="a" style="left:40px;top:704px;width:1222px;height:28px;background:#1e1e1e;"></div>
<svg style="left:48px;top:714px" width="11" height="10" viewBox="0 0 11 10"><rect x="0.5" y="0.5" width="10" height="9" fill="none" stroke="#8a8a8a" stroke-width="1"/><rect x="0.5" y="0.5" width="4.5" height="9" fill="#8a8a8a"/></svg>
<div class="a" style="left:72px;top:708px;width:200px;height:22px;background:#2b2c2d;"></div>
<svg style="left:78px;top:711px" width="17" height="15" viewBox="0 0 17 15" fill="none" stroke="#c8c8c8" stroke-width="1.3"><circle cx="8.4" cy="5.4" r="4.4"/><path d="M5.2 8.6L0.8 13.4"/><path d="M11.5 11.5h4l-2 2.2z" fill="#c8c8c8" stroke="none"/></svg>
<div class="t" id="t78" style="left:99.5px;top:712px;font-size:11.75px;color:#8c8c8c;letter-spacing:-0.010px;">Type to locate (Ctrl+K)</div>
<div class="a" style="left:275px;top:708px;width:1px;height:22px;background:#4a4a4a;"></div>
<div class="t" id="t79" style="left:285px;top:712px;font-size:11.5px;color:#f0f0f0;">1</div>
<div class="t" id="t80" style="left:299px;top:712px;font-size:11.5px;color:#f0f0f0;letter-spacing:-0.342px;">Issues</div>
<div class="t" id="t81" style="left:347.3px;top:712px;font-size:11.5px;color:#f0f0f0;">2</div>
<div class="t" id="t82" style="left:361px;top:712px;font-size:11.75px;color:#f0f0f0;letter-spacing:-0.363px;">Search Results</div>
<div class="t" id="t83" style="left:453px;top:712px;font-size:11.5px;color:#f0f0f0;">3</div>
<div class="t" id="t84" style="left:467.3px;top:712px;font-size:11.75px;color:#f0f0f0;letter-spacing:0.315px;">Application Output</div>
<div class="t" id="t85" style="left:586px;top:712px;font-size:11.5px;color:#f0f0f0;">5</div>
<div class="t" id="t86" style="left:600px;top:712px;font-size:11.75px;color:#f0f0f0;letter-spacing:0.026px;">QML Debugger Console</div>
<svg style="left:745.5px;top:714px" width="8" height="12" viewBox="0 0 8 12"><path d="M0 5L4 0.5L8 5zM0 7L4 11.5L8 7z" fill="#d0d0d0"/></svg>
<div class="a" style="left:1183px;top:708px;width:24px;height:21px;background:#0e0e0e;"></div>
<svg style="left:1188px;top:711px" width="15" height="12" viewBox="0 0 15 12"><path d="M9 3.4h5L11.5 0.6z" fill="#d8d8d8"/><rect x="0.6" y="7" width="13.4" height="4" rx="1.6" fill="#1a1a1a" stroke="#d8d8d8" stroke-width="1.1"/><rect x="1.6" y="8" width="8" height="2" fill="#9a9a9a"/></svg>
<svg style="left:1220px;top:713px" width="12" height="11" viewBox="0 0 12 11"><rect x="0.5" y="0.5" width="10.5" height="10" fill="none" stroke="#8a8a8a" stroke-width="1"/><rect x="6" y="0.5" width="5" height="10" fill="#8a8a8a"/></svg>
<svg style="left:1245px;top:715px" width="17" height="17" viewBox="0 0 17 17" stroke="#3c3c3c" stroke-width="1"><path d="M0 17L17 0M4 17L17 4M8 17L17 8M12 17L17 12"/></svg>
<svg style="left:10px;top:87px" width="20" height="20" viewBox="0 0 20 20" fill="#a8a8a8"><rect x="0.0" y="0.0" width="5.2" height="5.2"/><rect x="7.3" y="0.0" width="5.2" height="5.2"/><rect x="14.6" y="0.0" width="5.2" height="5.2"/><rect x="0.0" y="7.3" width="5.2" height="5.2"/><rect x="7.3" y="7.3" width="5.2" height="5.2"/><rect x="14.6" y="7.3" width="5.2" height="5.2"/><rect x="0.0" y="14.6" width="5.2" height="5.2"/><rect x="7.3" y="14.6" width="5.2" height="5.2"/><rect x="14.6" y="14.6" width="5.2" height="5.2"/></svg>
<svg style="left:10px;top:125px" width="20" height="20" viewBox="0 0 20 20"><rect x="0" y="0" width="19.4" height="19.4" fill="#a8a8a8"/><path d="M4 5.2h11M4 8.2h11M4 11.2h11M4 14.2h7.5" stroke="#1e1e1e" stroke-width="1.2"/></svg>
<div class="a" style="left:0px;top:154px;width:40px;height:38px;background:#000;"></div>
<div class="a" style="left:1px;top:154px;width:2px;height:38px;background:#b8b8b8;"></div>
<svg style="left:9px;top:163px" width="21" height="21" viewBox="0 0 21 21"><path d="M0.3 20.4L2.6 13.6L14.4 1.8L19 6.4L7.2 18.2z" fill="#d26b0c"/><path d="M13 3.2l4.6 4.6" stroke="#000" stroke-width="1.3"/></svg>
<svg style="left:10px;top:200px" width="20" height="21" viewBox="0 0 20 21"><g stroke="#a8a8a8" stroke-width="1.4" fill="none"><path d="M4 8.4L0.8 5.6M3.6 12.4H0.2M4 16L1 19M16 8.4l3.2-2.8M16.4 12.4h3.4M16 16l3 3"/></g><g fill="#a8a8a8"><path d="M10 0.4a4.4 4.4 0 0 1 4.4 3.8H5.6A4.4 4.4 0 0 1 10 0.4z"/><path d="M4.2 5.2h11.6a2.4 2.4 0 0 1 1.4 2.2v5.6a7.2 7.2 0 0 1-14.4 0V7.4a2.4 2.4 0 0 1 1.4-2.2z"/></g><path d="M10 5.2V20.4" stroke="#1e1e1e" stroke-width="1.4"/></svg>
<svg style="left:10px;top:239px" width="20" height="20" viewBox="0 0 20 20"><path d="M19.4 4.2a5.6 5.6 0 0 1-7.6 6.2L3.6 18.8a1.9 1.9 0 0 1-2.7-2.7L9.3 7.9A5.6 5.6 0 0 1 15.6 0.4L12.4 3.6l0.8 3 3 0.8z" fill="#a8a8a8"/></svg>
<svg style="left:10px;top:277px" width="21" height="21" viewBox="0 0 21 21"><circle cx="10.5" cy="10.5" r="10.2" fill="#a8a8a8"/><text x="10.5" y="16" font-family="Liberation Sans,sans-serif" font-weight="bold" font-size="15.5" fill="#1e1e1e" text-anchor="middle">?</text></svg>
<div class="a" style="left:0px;top:646px;width:38px;height:1px;background:#555;"></div>
<svg style="left:7px;top:660px" width="30" height="24" viewBox="0 0 30 24"><rect x="1" y="1" width="22.6" height="16" rx="1.6" fill="#3c3c3c" stroke="#a8a8a8" stroke-width="1.8"/><path d="M9 18h6.6l2.6 5.4H6.4z" fill="#a8a8a8"/><path d="M26 9v5l3-2.5z" fill="#a8a8a8"/></svg>
<svg style="left:10px;top:698px" width="19" height="23" viewBox="0 0 19 23"><path d="M0.8 0.6V22.2L18.4 11.4z" fill="#7fba5e"/></svg>
<svg style="left:90px;top:236px" width="72" height="90" viewBox="0 0 72 90"><g fill="#d6d6d6" opacity="1"><rect x="23.88" y="3.37" width="9.00" height="5.32"/><rect x="20.81" y="6.32" width="5.32" height="47.82"/><rect x="30.89" y="6.32" width="5.44" height="35.54"/><rect x="34.33" y="22.66" width="7.90" height="5.69"/><rect x="40.22" y="25.97" width="4.95" height="15.88"/><rect x="43.17" y="26.34" width="9.37" height="5.32"/><rect x="50.30" y="29.41" width="5.32" height="15.51"/><rect x="53.61" y="30.03" width="6.91" height="5.32"/><rect x="58.28" y="33.10" width="5.32" height="5.32"/><rect x="61.35" y="36.17" width="5.32" height="29.64"/><rect x="58.28" y="63.56" width="5.32" height="12.32"/><rect x="55.21" y="73.64" width="5.32" height="9.13"/><rect x="20.57" y="80.40" width="39.71" height="5.32"/><rect x="20.20" y="72.41" width="5.32" height="10.35"/><rect x="16.88" y="66.27" width="5.69" height="8.51"/><rect x="13.44" y="58.90" width="5.69" height="9.74"/><rect x="10.37" y="51.53" width="5.32" height="9.74"/><rect x="7.30" y="46.61" width="5.32" height="7.28"/><rect x="4.23" y="38.26" width="5.32" height="10.72"/><rect x="4.23" y="35.56" width="15.14" height="5.19"/><rect x="17.13" y="38.75" width="5.93" height="6.18"/></g><g fill="#111" opacity="0.6"><rect x="25.88" y="5.37" width="8.20" height="4.52"/><rect x="22.81" y="8.32" width="4.52" height="47.02"/><rect x="32.89" y="8.32" width="4.64" height="34.74"/><rect x="36.33" y="24.66" width="7.10" height="4.89"/><rect x="42.22" y="27.97" width="4.15" height="15.08"/><rect x="45.17" y="28.34" width="8.57" height="4.52"/><rect x="52.30" y="31.41" width="4.52" height="14.71"/><rect x="55.61" y="32.03" width="6.11" height="4.52"/><rect x="60.28" y="35.10" width="4.52" height="4.52"/><rect x="63.35" y="38.17" width="4.52" height="28.84"/><rect x="60.28" y="65.56" width="4.52" height="11.52"/><rect x="57.21" y="75.64" width="4.52" height="8.33"/><rect x="22.57" y="82.40" width="38.91" height="4.52"/><rect x="22.20" y="74.41" width="4.52" height="9.55"/><rect x="18.88" y="68.27" width="4.89" height="7.71"/><rect x="15.44" y="60.90" width="4.89" height="8.94"/><rect x="12.37" y="53.53" width="4.52" height="8.94"/><rect x="9.30" y="48.61" width="4.52" height="6.48"/><rect x="6.23" y="40.26" width="4.52" height="9.92"/><rect x="6.23" y="37.56" width="14.34" height="4.39"/><rect x="19.13" y="40.75" width="5.13" height="5.38"/></g><polygon points="25.18,7.62 32.19,7.62 32.19,27.27 41.52,27.27 41.52,30.71 51.60,30.71 51.60,34.40 59.83,34.40 59.83,37.47 62.90,37.47 62.90,65.11 59.83,65.11 59.83,74.94 56.76,74.94 56.76,82.06 24.57,82.06 24.57,73.71 21.62,73.71 21.62,67.57 18.18,67.57 18.18,60.20 14.74,60.20 14.74,52.83 11.67,52.83 11.67,47.91 8.60,47.91 8.60,39.80 18.67,39.80 18.67,43.98 25.18,43.98" fill="#fff"/><g fill="#000" opacity="1"><rect x="25.18" y="4.67" width="7.00" height="3.32"/><rect x="22.11" y="7.62" width="3.32" height="45.82"/><rect x="32.19" y="7.62" width="3.44" height="33.54"/><rect x="35.63" y="23.96" width="5.90" height="3.69"/><rect x="41.52" y="27.27" width="2.95" height="13.88"/><rect x="44.47" y="27.64" width="7.37" height="3.32"/><rect x="51.60" y="30.71" width="3.32" height="13.51"/><rect x="54.91" y="31.33" width="4.91" height="3.32"/><rect x="59.58" y="34.40" width="3.32" height="3.32"/><rect x="62.65" y="37.47" width="3.32" height="27.64"/><rect x="59.58" y="64.86" width="3.32" height="10.32"/><rect x="56.51" y="74.94" width="3.32" height="7.13"/><rect x="21.87" y="81.70" width="37.71" height="3.32"/><rect x="21.50" y="73.71" width="3.32" height="8.35"/><rect x="18.18" y="67.57" width="3.69" height="6.51"/><rect x="14.74" y="60.20" width="3.69" height="7.74"/><rect x="11.67" y="52.83" width="3.32" height="7.74"/><rect x="8.60" y="47.91" width="3.32" height="5.28"/><rect x="5.53" y="39.56" width="3.32" height="8.72"/><rect x="5.53" y="36.86" width="13.14" height="3.19"/><rect x="18.43" y="40.05" width="3.93" height="4.18"/></g></svg>
<div class="a" style="left:1261px;top:31px;width:1px;height:701px;background:#1e1e1e;"></div>
<div class="a" style="left:0px;top:731px;width:1262px;height:1px;background:#1a1a1a;"></div>
</body>
</html>
